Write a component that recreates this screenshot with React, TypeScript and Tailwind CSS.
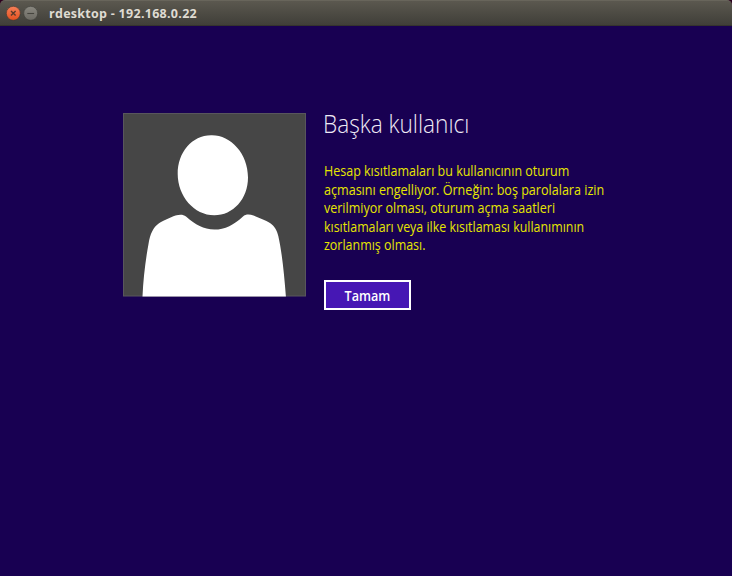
const messageLines = [
  { text: 'Hesap kısıtlamaları bu kullanıcının oturum', style: 'origin-left scale-x-[0.893]' },
  { text: 'açmasını engelliyor. Örneğin: boş parolalara izin', style: 'origin-left scale-x-[0.898]' },
  { text: 'verilmiyor olması, oturum açma saatleri', style: 'origin-left scale-x-[0.893]' },
  { text: 'kısıtlamaları veya ilke kısıtlaması kullanımının', style: 'origin-left scale-x-[0.886]' },
  { text: 'zorlanmış olması.', style: 'origin-left scale-x-[0.89]' },
];

function TitleBar() {
  return (
    <div className="h-[26px] bg-[#2c001e]">
      <header className="flex h-[26px] items-center rounded-t-[5px] border-t border-b border-t-[#68655b] border-b-[#34332e] bg-linear-to-b from-[#5b584f] to-[#403f39] pl-[5px]">
        <svg className="h-4 w-[34px]" viewBox="0 0 34 16">
          <defs>
            <linearGradient id="close" x2="0" y2="1">
              <stop stopColor="#f58059" />
              <stop offset="1" stopColor="#e4511f" />
            </linearGradient>
            <linearGradient id="minimize" x2="0" y2="1">
              <stop stopColor="#8a8880" />
              <stop offset="1" stopColor="#6c6a63" />
            </linearGradient>
          </defs>
          <circle cx="8.3" cy="8.3" r="7" fill="url(#close)" stroke="#3d3731" strokeWidth=".6" />
          <path d="M6 6l4.6 4.6M10.6 6L6 10.6" stroke="#5a3a2a" strokeWidth="1.4" />
          <circle cx="25.7" cy="8.3" r="7" fill="url(#minimize)" stroke="#3d3c37" strokeWidth=".6" />
          <path d="M22.3 8.5h6.8" stroke="#45443e" strokeWidth="1.1" />
        </svg>
        <h1 className="mt-px ml-[10px] whitespace-nowrap font-['Open_Sans',sans-serif] text-[12.5px] leading-6 font-bold tracking-[0.28px] text-[#dfdbd2]">
          rdesktop - 192.168.0.22
        </h1>
      </header>
    </div>
  );
}

function Avatar() {
  return (
    <svg className="mt-px h-[183.5px] w-[183px] shrink-0" viewBox="0 0 183 183.5">
      <rect x=".5" y=".5" width="182" height="182.5" fill="#464646" stroke="#58565c" />
      <path
        fill="#fff"
        d="M88 22.2C107 21.5 125 40 125 64.5C125 86 110 102.3 91.3 102.3C71 102.3 54.7 83 54.7 61C54.7 39 69 22.5 88 22.2Z"
      />
      <path
        fill="#fff"
        d="M19.5 183.5C20.3 166 22.5 147 25.5 131C27.2 121 30 114.5 36 110.3C40 107.6 47 104.7 52.5 102.6C57 101.1 60.2 101.3 63 103.6C72.5 112 80.5 116.5 91.3 116.5C102 116.5 111 111.7 120 103.4C122.5 101.3 126.5 101.1 130.5 102.6C136 104.7 142.5 107.3 147 110C151.5 112.8 154 117.5 155.3 123C158.5 137 161 158 162.9 183.5Z"
      />
    </svg>
  );
}

export default function App() {
  return (
    <div className="h-[576px] w-[732px] overflow-hidden bg-[#180052]">
      <TitleBar />
      <main className="flex pt-[86px] pl-[123px] font-['Open_Sans','Noto_Sans',sans-serif]">
        <Avatar />
        <section className="ml-[16px] flex flex-col items-start">
          <h2 className="mt-[-5px] ml-[0.5px] h-8 origin-left scale-x-[0.905] text-[25px] leading-8 font-light whitespace-nowrap text-[#eeeaf5]">
            Başka kullanıcı
          </h2>
          <div className="mt-[23.4px] ml-[2px] text-[14px] leading-[18.4px] text-[#e6e600]">
            {messageLines.map((line) => (
              <p key={line.text} className="flex whitespace-nowrap">
                <span className={line.style}>{line.text}</span>
              </p>
            ))}
          </div>
          <button className="mt-[25.6px] ml-[2px] flex h-[30px] w-[86.5px] items-center justify-center border-2 border-white bg-[#4617b4] pt-[2px] text-[14px] leading-[24px] font-semibold text-white">
            <span className="scale-x-90">Tamam</span>
          </button>
        </section>
      </main>
    </div>
  );
}
